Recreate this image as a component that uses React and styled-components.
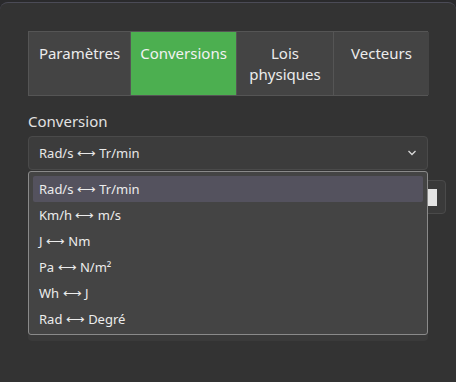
import styled, { createGlobalStyle } from 'styled-components';

const GlobalStyle = createGlobalStyle`
	html, body {
		margin: 0;
		padding: 0;
		background: #2a2a2c;
		height: 100%;
	}
	body {
		font-family: 'Noto Sans', 'Open Sans', sans-serif;
		color: #e6e6e6;
	}
`;

const Window = styled.div`
	margin-top: 2px;
	height: 380px;
	box-sizing: border-box;
	background: #333333;
	border-top: 1px solid #4b4b56;
	border-radius: 8px 8px 0 0;
	padding: 28px 28px 0;
`;

const Tabs = styled.div`
	display: grid;
	grid-template-columns: 101px 106px 97px 96px;
	border: 1px solid #555555;
	background: #444444;
`;

const Tab = styled.div`
	height: 63px;
	box-sizing: border-box;
	padding-top: 11px;
	text-align: center;
	font-size: 15px;
	line-height: 21px;
	color: ${(p) => (p.$active ? '#f2f2f2' : '#ececec')};
	background: ${(p) => (p.$active ? '#4caf50' : '#444444')};
	& + & {
		border-left: 1px solid #555555;
	}
`;

const Label = styled.div`
	margin-top: 15px;
	font-size: 15px;
	line-height: 20px;
	color: #e2e2e2;
`;

const Field = styled.div`
	position: relative;
	margin-top: 5px;
`;

const Select = styled.div`
	display: flex;
	align-items: center;
	justify-content: space-between;
	height: 34px;
	box-sizing: border-box;
	padding: 0 10px;
	background: #3c3c3c;
	border: 1px solid #4a4a4a;
	border-radius: 4px;
	font-size: 13px;
	color: #e8e8e8;
`;

const Under = styled.div`
	display: flex;
	flex-direction: column;
	gap: 10px;
	margin-top: 10px;
`;

const NumberInput = styled.div`
	position: relative;
	height: 34px;
	margin-right: -18px;
	box-sizing: border-box;
	background: #3a3a3a;
	border: 1px solid #4a4a4a;
	border-radius: 4px;
`;

const Spin = styled.div`
	position: absolute;
	right: 8px;
	top: 8px;
	width: 9px;
	height: 17px;
	background: #e4e4e4;
`;

const ResultBox = styled.div`
	height: 117px;
	background: #3a3a3a;
	border-radius: 4px;
`;

const List = styled.div`
	position: absolute;
	left: 0;
	right: 0;
	top: 35px;
	box-sizing: border-box;
	padding: 4px 4px 2px;
	background: #444444;
	border: 1px solid #8a8a8a;
	border-radius: 3px;
`;

const Option = styled.div`
	height: 26px;
	display: flex;
	align-items: center;
	padding: 0 6px;
	font-size: 13px;
	color: #ececec;
	background: ${(p) => (p.$selected ? '#54525e' : 'transparent')};
	border-radius: 2px;
`;

const tabs = [
	{ label: 'Paramètres' },
	{ label: 'Conversions', active: true },
	{ label: 'Lois\nphysiques' },
	{ label: 'Vecteurs' },
];

const conversions = [
	'Rad/s ⟷ Tr/min',
	'Km/h ⟷ m/s',
	'J ⟷ Nm',
	'Pa ⟷ N/m²',
	'Wh ⟷ J',
	'Rad ⟷ Degré',
];

function Chevron() {
	return (
		<svg width="10" height="6" viewBox="0 0 10 6" fill="none">
			<path d="M1.5 1 L5 4.5 L8.5 1" stroke="#d8d8d8" strokeWidth="1.3" />
		</svg>
	);
}

export default function App() {
	return (
		<>
			<GlobalStyle />
			<Window>
				<Tabs>
					{tabs.map((t) => (
						<Tab key={t.label} $active={t.active}>
							{t.label.split('\n').map((line) => (
								<div key={line}>{line}</div>
							))}
						</Tab>
					))}
				</Tabs>

				<Label>Conversion</Label>
				<Field>
					<Select>
						<span>{conversions[0]}</span>
						<Chevron />
					</Select>

					<Under>
						<NumberInput>
							<Spin />
						</NumberInput>
						<ResultBox />
					</Under>

					<List>
						{conversions.map((c, i) => (
							<Option key={c} $selected={i === 0}>
								{c}
							</Option>
						))}
					</List>
				</Field>
			</Window>
		</>
	);
}
